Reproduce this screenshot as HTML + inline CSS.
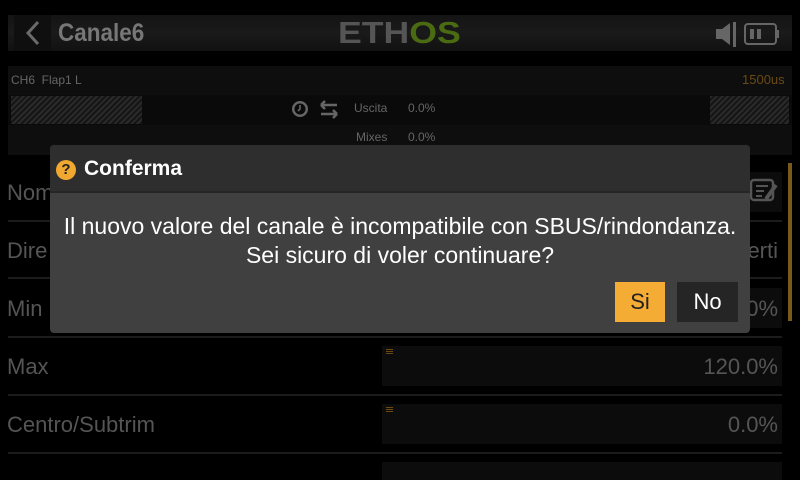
<!DOCTYPE html>
<html><head><meta charset="utf-8"><style>
*{margin:0;padding:0;box-sizing:border-box}
body{width:800px;height:480px;background:#000;position:relative;overflow:hidden;font-family:"Liberation Sans","DejaVu Sans",sans-serif}
.a{position:absolute}
.hatch{background:repeating-linear-gradient(135deg,#2a2a2a 0 2px,#151515 2px 4px)}
.n{display:inline-block;transform-origin:left center;white-space:nowrap}
.lbl{color:#555;font-size:22px}
.val{color:#555;font-size:22px;right:22px;text-align:right}
.sep{height:2px;background:#1c1c1c;left:8px;width:774px}
.box{background:#0c0c0c;left:382px;width:400px}
.grip{width:7px;height:6px;background:repeating-linear-gradient(#6a4a10 0 1px,transparent 1px 2px)}
</style></head><body>
<!-- header -->
<div class="a" style="left:8px;top:15px;width:784px;height:36px;background:linear-gradient(#141414,#1a1a1a 50%,#111)"></div>
<div class="a" style="left:14px;top:15px;width:37px;height:36px;background:#0f0f0f"></div>
<svg class="a" style="left:22px;top:20px" width="22" height="26"><path d="M16 2 L6 13 L16 24" stroke="#6a6a6a" stroke-width="3" fill="none"/></svg>
<div class="a" style="left:58px;top:19px;font-size:25px;font-weight:bold;color:#777"><span class="n" style="transform:scaleX(.9)">Canale6</span></div>
<div class="a" style="left:338px;top:15px;font-size:31px;font-weight:bold;line-height:36px"><span class="n" style="transform:scaleX(1.15)"><span style="color:#555">ETH</span><span style="color:#4a6b12">OS</span></span></div>
<svg class="a" style="left:714px;top:21px" width="70" height="26">
<path d="M2 8 H8 L16 2 V24 L8 18 H2Z" fill="#666"/><rect x="19" y="1" width="3" height="25" fill="#666"/>
<rect x="31" y="3" width="31" height="20" rx="3" fill="none" stroke="#666" stroke-width="2"/><rect x="62" y="9" width="3" height="8" fill="#666"/>
<rect x="36" y="8" width="4" height="10" fill="#666"/><rect x="43" y="8" width="4" height="10" fill="#666"/></svg>
<!-- channel panel -->
<div class="a" style="left:8px;top:66px;width:784px;height:89px;background:#0e0e0e"></div>
<div class="a" style="left:11px;top:73px;font-size:12px;color:#666">CH6&nbsp; Flap1 L</div>
<div class="a" style="left:742px;top:72px;font-size:13px;color:#6a4a14">1500us</div>
<div class="a" style="left:8px;top:95px;width:784px;height:30px;background:#0a0a0a"></div>
<div class="a hatch" style="left:11px;top:96px;width:131px;height:28px"></div>
<div class="a hatch" style="left:710px;top:96px;width:79px;height:28px"></div>
<svg class="a" style="left:291px;top:99px" width="50" height="22"><circle cx="9" cy="10" r="8" fill="#666"/><circle cx="9" cy="10" r="5.5" fill="#0a0a0a"/><path d="M9 6 V10 L7 12" stroke="#666" stroke-width="1.6" fill="none"/>
<path d="M30 6 H46 M30 6 L34 2 M30 6 L34 10 M30 15 H46 M46 15 L42 11 M46 15 L42 19" stroke="#666" stroke-width="2.5" fill="none"/></svg>
<div class="a" style="left:354px;top:101px;font-size:12px;color:#666">Uscita</div>
<div class="a" style="left:408px;top:101px;font-size:12px;color:#666">0.0%</div>
<div class="a" style="left:356px;top:130px;font-size:12px;color:#666">Mixes</div>
<div class="a" style="left:408px;top:130px;font-size:12px;color:#666">0.0%</div>
<!-- rows -->
<div class="a lbl" style="left:7px;top:180px">Nom</div>
<div class="a box" style="top:172px;height:40px"></div>
<svg class="a" style="left:748px;top:177px" width="32" height="28"><rect x="3" y="3" width="22" height="20" rx="3" fill="none" stroke="#555" stroke-width="2.5"/><path d="M8 9H20M8 14H16M8 19H14" stroke="#555" stroke-width="2"/><path d="M18 22 L28 8" stroke="#555" stroke-width="4"/></svg>
<div class="a sep" style="top:220px"></div>
<div class="a lbl" style="left:7px;top:238px">Dire</div>
<div class="a val" style="top:238px">erti</div>
<div class="a sep" style="top:277px"></div>
<div class="a box" style="top:288px;height:40px"></div>
<div class="a lbl" style="left:7px;top:296px">Min</div>
<div class="a val" style="top:296px">0%</div>
<div class="a sep" style="top:336px"></div>
<div class="a box" style="top:346px;height:40px"></div>
<div class="a grip" style="left:386px;top:349px"></div>
<div class="a lbl" style="left:7px;top:354px">Max</div>
<div class="a val" style="top:354px">120.0%</div>
<div class="a sep" style="top:394px"></div>
<div class="a box" style="top:404px;height:40px"></div>
<div class="a grip" style="left:386px;top:407px"></div>
<div class="a lbl" style="left:7px;top:412px">Centro/Subtrim</div>
<div class="a val" style="top:412px">0.0%</div>
<div class="a sep" style="top:452px"></div>
<div class="a box" style="top:462px;height:18px"></div>
<div class="a" style="left:788px;top:163px;width:4px;height:158px;background:#7a5a1a"></div>
<!-- dialog -->
<div class="a" style="left:50px;top:145px;width:700px;height:188px;background:#404040;border-radius:4px;overflow:hidden">
<div style="height:48px;background:#2e2e2e;border-bottom:2px solid #262626"></div>
</div>
<div class="a" style="left:56px;top:160px;width:20px;height:20px;border-radius:50%;background:#f0a830;color:#222;font-size:15px;font-weight:bold;text-align:center;line-height:20px">?</div>
<div class="a" style="left:84px;top:157px;font-size:21px;font-weight:bold;color:#fff">Conferma</div>
<div class="a" style="left:30px;top:212px;width:740px;text-align:center;color:#fff;font-size:23px;line-height:29px">Il nuovo valore del canale è incompatibile con SBUS/rindondanza.<br>Sei sicuro di voler continuare?</div>
<div class="a" style="left:615px;top:282px;width:50px;height:40px;background:#f5ac35;color:#222;font-size:22px;text-align:center;line-height:40px">Si</div>
<div class="a" style="left:677px;top:282px;width:61px;height:40px;background:#252525;color:#fff;font-size:22px;text-align:center;line-height:40px">No</div>
</body></html>
